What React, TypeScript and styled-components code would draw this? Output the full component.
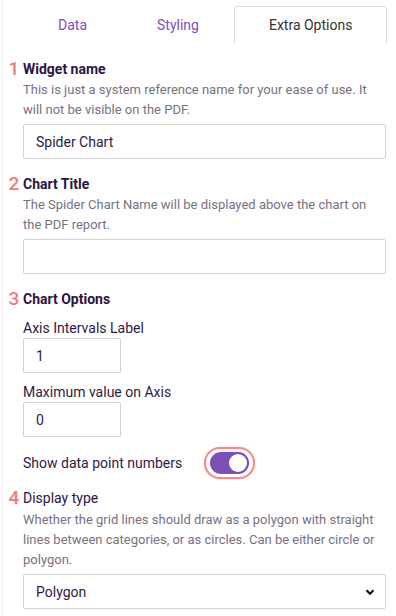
import React, { useState } from "react";
import styled, { createGlobalStyle } from "styled-components";

const GlobalStyle = createGlobalStyle`
  html, body {
    margin: 0;
    padding: 0;
    background: #fff;
  }
  body {
    font-family: Roboto, "Liberation Sans", sans-serif;
    font-size: 14px;
    color: #2d1b45;
  }
`;

const Panel = styled.div`
  min-height: 616px;
  box-sizing: border-box;
  margin-left: 2px;
  border-left: 1px solid #eeeeee;
  padding: 6px 10px 0 20px;
`;

const TabBar = styled.div`
  display: flex;
  border-bottom: 1px solid #dcdcdc;
`;

const Tab = styled.div<{ active?: boolean }>`
  padding: 0 34px;
  height: 36px;
  line-height: 36px;
  white-space: nowrap;
  margin-bottom: -1px;
  margin-left: ${p => (p.active ? "auto" : "0")};
  border: 1px solid ${p => (p.active ? "#dcdcdc" : "transparent")};
  border-bottom-color: ${p => (p.active ? "#fff" : "transparent")};
  border-radius: 4px 4px 0 0;
  background: #fff;
  color: ${p => (p.active ? "#333333" : "#7c50c1")};
  cursor: pointer;
`;

const Section = styled.div`
  display: grid;
  grid-template-columns: 20px 1fr;
  margin-top: 15px;
  margin-left: -20px;
`;

const Num = styled.div`
  color: #f47a7a;
  font-size: 19px;
  line-height: 20px;
  font-weight: 500;
  text-align: center;
  padding-left: 2px;
`;

const Body = styled.div`
  display: flex;
  flex-direction: column;
`;

const Title = styled.div<{ light?: boolean }>`
  font-weight: ${p => (p.light ? 400 : 700)};
  line-height: 20px;
  margin-bottom: ${p => (p.light ? "1px" : "0")};
  color: #2a1540;
`;

const Desc = styled.div`
  color: #78727f;
  font-size: 13px;
  line-height: 20px;
  margin-top: 1px;
`;

const Label = styled.div`
  line-height: 20px;
  color: #2d1b45;
  margin-top: 9px;
`;

const Input = styled.input<{ small?: boolean }>`
  box-sizing: border-box;
  width: ${p => (p.small ? "98px" : "100%")};
  height: 35px;
  margin-top: ${p => (p.small ? "0" : "4px")};
  border: 1px solid #d3d3d3;
  border-radius: 2px;
  padding: 0 12px;
  font-family: inherit;
  font-size: 14px;
  color: #2d1b45;
  outline: none;
`;

const ToggleRow = styled.div`
  display: flex;
  align-items: center;
  margin-top: 10px;
  margin-bottom: -6px;
  gap: 22px;
`;

const ToggleRing = styled.div`
  padding: 3px 4px;
  border: 2px solid #f58a8a;
  border-radius: 18px;
  box-shadow: 0 0 2px rgba(245, 120, 120, 0.6);
  display: flex;
`;

const Track = styled.button<{ on: boolean }>`
  width: 39px;
  height: 22px;
  border: none;
  border-radius: 11px;
  padding: 2px;
  background: ${p => (p.on ? "#7b4fb3" : "#ccc")};
  display: flex;
  justify-content: ${p => (p.on ? "flex-end" : "flex-start")};
  cursor: pointer;
`;

const Knob = styled.span`
  width: 18px;
  height: 18px;
  border-radius: 50%;
  background: #fff;
`;

const SelectBox = styled.div`
  margin-top: 4px;
  height: 35px;
  box-sizing: border-box;
  border: 1px solid #d3d3d3;
  border-radius: 2px;
  display: flex;
  align-items: center;
  justify-content: space-between;
  padding: 0 9px 0 12px;
  color: #2d1b45;
`;

const App = () => {
  const [on, setOn] = useState(true);
  return (
    <>
      <GlobalStyle />
      <Panel>
        <TabBar>
          <Tab>Data</Tab>
          <Tab>Styling</Tab>
          <Tab active>Extra Options</Tab>
        </TabBar>

        <Section>
          <Num>1</Num>
          <Body>
            <Title>Widget name</Title>
            <Desc>This is just a system reference name for your ease of use. It will not be visible on the PDF.</Desc>
            <Input defaultValue="Spider Chart" />
          </Body>
        </Section>

        <Section>
          <Num>2</Num>
          <Body>
            <Title>Chart Title</Title>
            <Desc>The Spider Chart Name will be displayed above the chart on the PDF report.</Desc>
            <Input defaultValue="" />
          </Body>
        </Section>

        <Section>
          <Num>3</Num>
          <Body>
            <Title>Chart Options</Title>
            <Label>Axis Intervals Label</Label>
            <Input small defaultValue="1" />
            <Label>Maximum value on Axis</Label>
            <Input small defaultValue="0" />
            <ToggleRow>
              <span>Show data point numbers</span>
              <ToggleRing>
                <Track on={on} onClick={() => setOn(!on)}>
                  <Knob />
                </Track>
              </ToggleRing>
            </ToggleRow>
          </Body>
        </Section>

        <Section>
          <Num>4</Num>
          <Body>
            <Title light>Display type</Title>
            <Desc>Whether the grid lines should draw as a polygon with straight lines between categories, or as circles. Can be either circle or polygon.</Desc>
            <SelectBox>
              <span>Polygon</span>
              <svg width="12" height="12" viewBox="0 0 12 12">
                <path d="M2.5 4.2 L6 7.7 L9.5 4.2" fill="none" stroke="#111" strokeWidth="2.2" />
              </svg>
            </SelectBox>
          </Body>
        </Section>
      </Panel>
    </>
  );
};

export default App;
